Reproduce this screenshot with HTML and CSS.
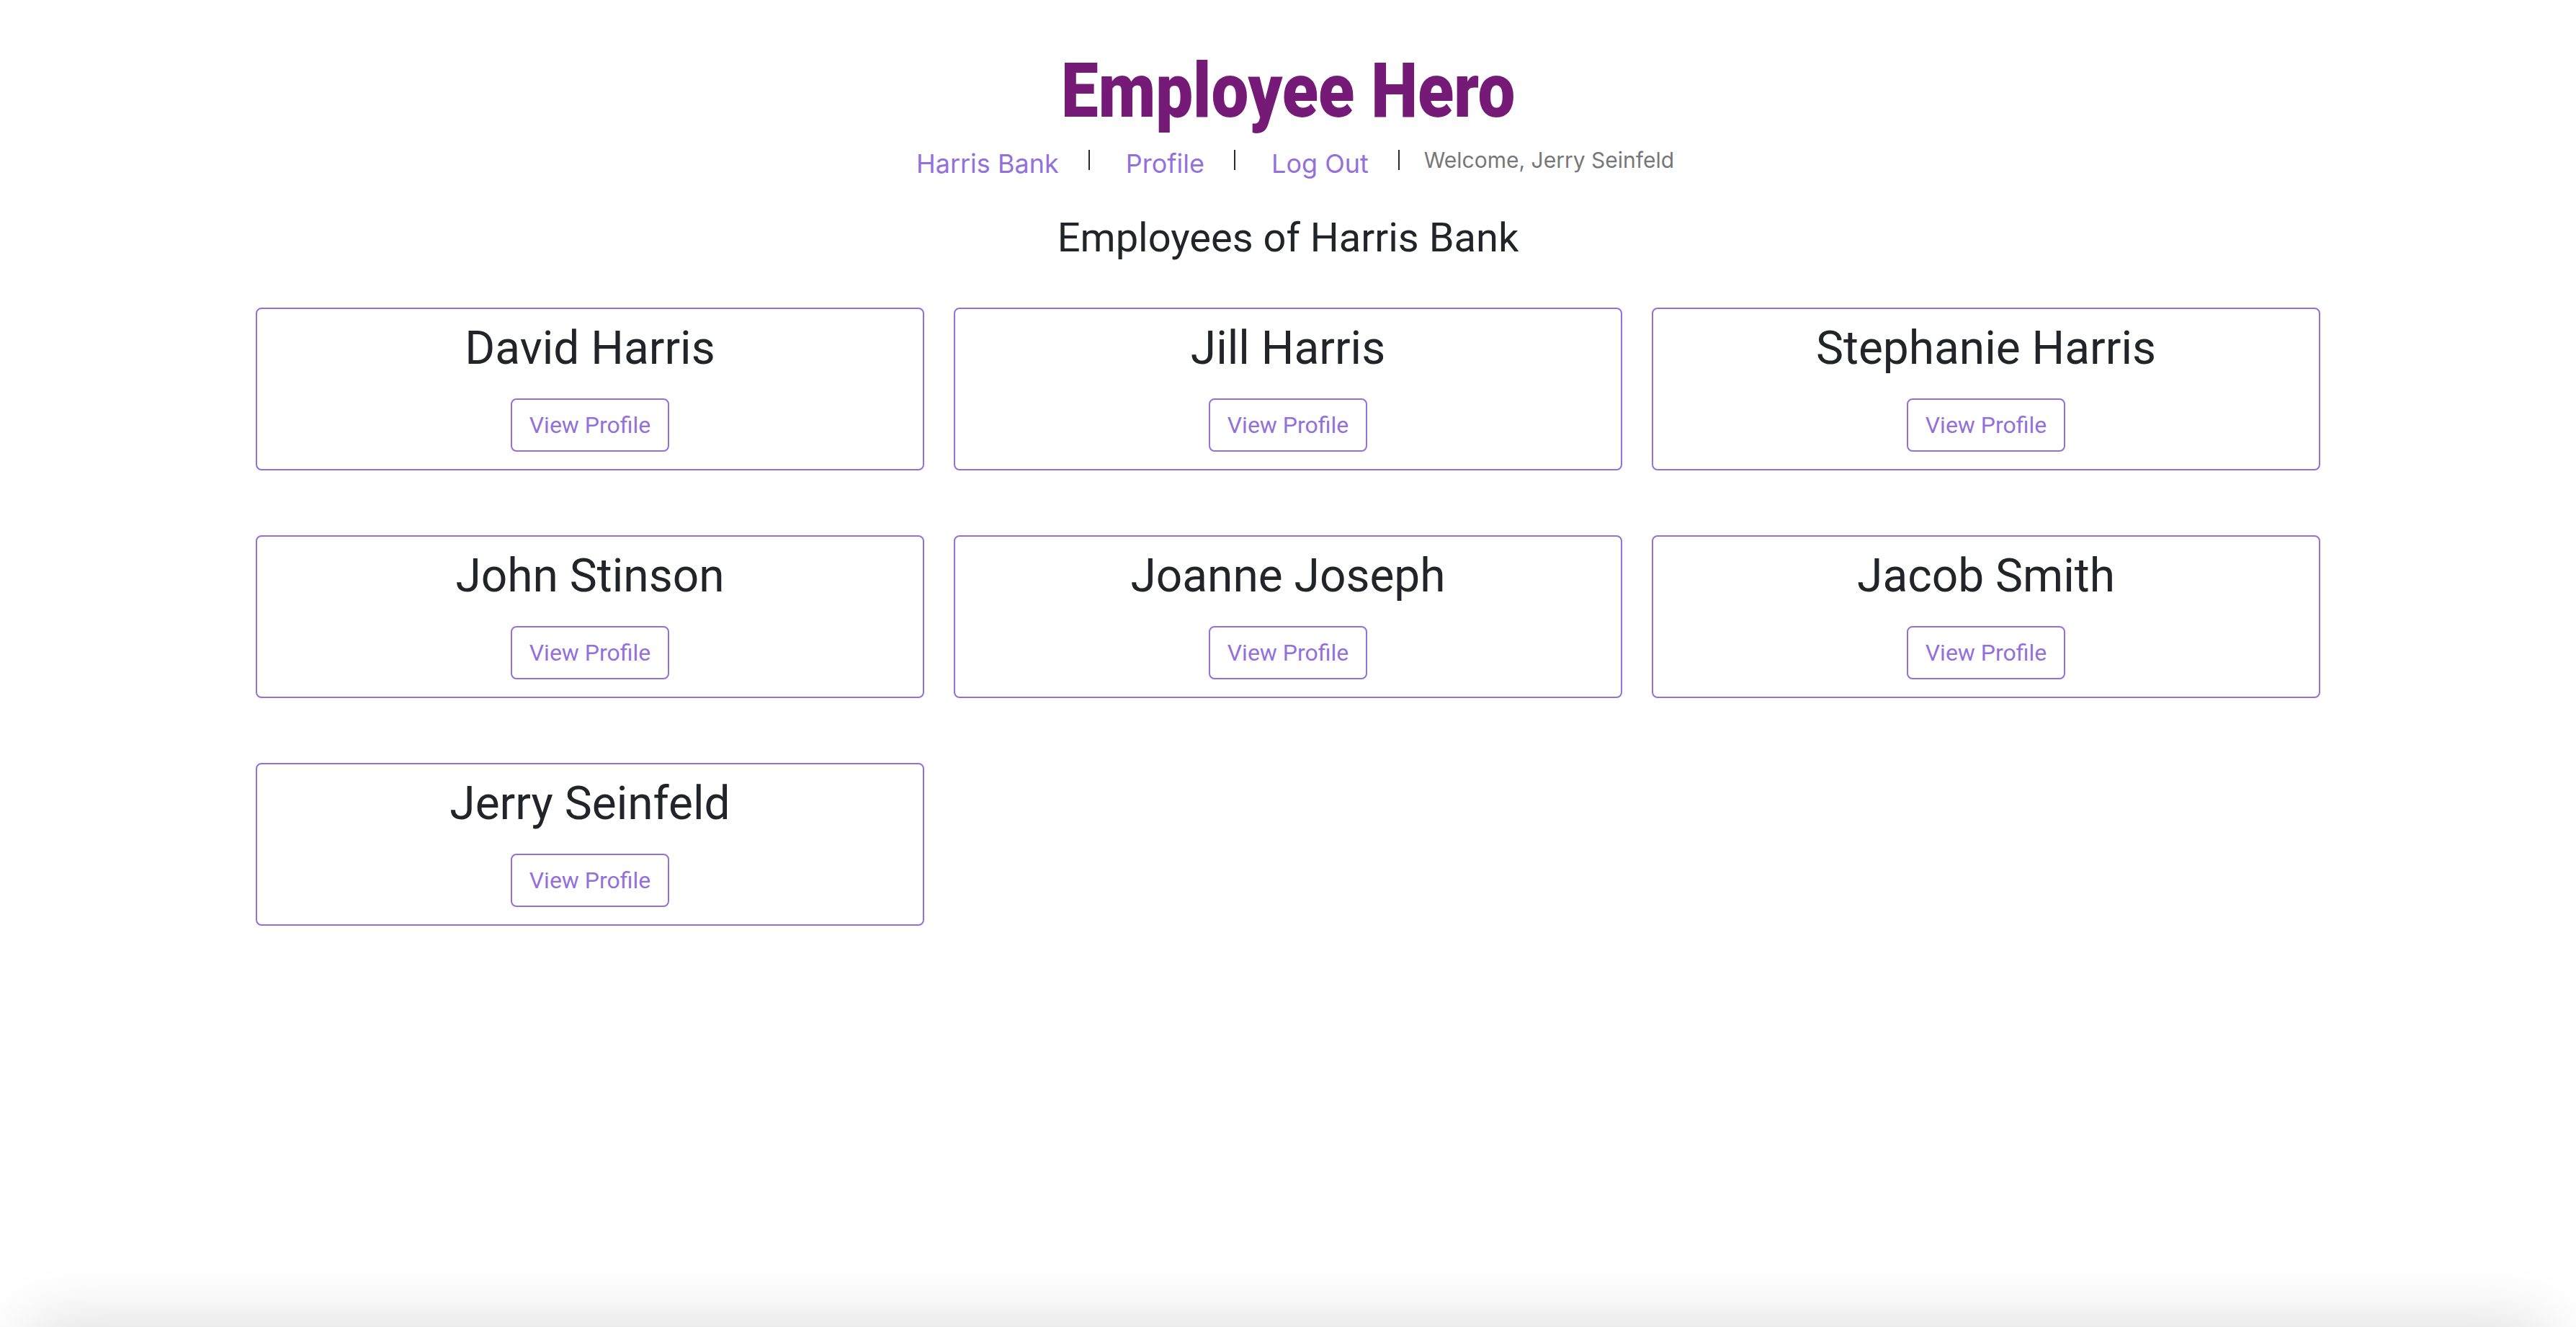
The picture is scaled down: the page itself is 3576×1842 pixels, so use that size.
FILE: index.html
```html
<!DOCTYPE html>
<html lang="en">
<head>
<meta charset="utf-8">
<title>Employee Hero</title>
<link rel="stylesheet" href="styles.css">
</head>
<body>
<header class="site-header">
  <h1 class="brand">Employee Hero</h1>
  <nav class="nav">
    <a class="nav-link" href="#">Harris Bank</a>
    <span class="sep"></span>
    <a class="nav-link" href="#">Profile</a>
    <span class="sep"></span>
    <a class="nav-link" href="#">Log Out</a>
    <span class="sep sep-last"></span>
    <span class="welcome">Welcome, Jerry Seinfeld</span>
  </nav>
</header>
<main class="container">
  <h3 class="page-title">Employees of Harris Bank</h3>
  <div class="grid">
    <div class="card"><h2 class="name">David Harris</h2><a class="btn" href="#">View Profile</a></div>
    <div class="card"><h2 class="name">Jill Harris</h2><a class="btn" href="#">View Profile</a></div>
    <div class="card"><h2 class="name">Stephanie Harris</h2><a class="btn" href="#">View Profile</a></div>
    <div class="card"><h2 class="name">John Stinson</h2><a class="btn" href="#">View Profile</a></div>
    <div class="card"><h2 class="name">Joanne Joseph</h2><a class="btn" href="#">View Profile</a></div>
    <div class="card"><h2 class="name">Jacob Smith</h2><a class="btn" href="#">View Profile</a></div>
    <div class="card"><h2 class="name">Jerry Seinfeld</h2><a class="btn" href="#">View Profile</a></div>
  </div>
</main>
<div class="bottom-shade"></div>
</body>
</html>
```
FILE: styles.css
```css
* { box-sizing: border-box; }
html, body { margin: 0; padding: 0; background: #fff; }
body {
  font-family: Roboto, Inter, "Noto Sans", sans-serif;
  color: #212529;
  min-height: 100vh;
}
.site-header {
  display: flex;
  flex-direction: column;
  align-items: center;
  padding-top: 73px;
}
.brand {
  margin: 0;
  font-family: Roboto, sans-serif;
  font-weight: 900;
  font-size: 106px;
  line-height: 1;
  color: #761a78;
  transform: scaleX(0.87);
}
.nav {
  display: flex;
  align-items: flex-start;
  margin-top: 21px;
  padding-left: 20px;
}
.nav-link {
  font-family: Inter, Roboto, sans-serif;
  font-size: 36px;
  line-height: 54px;
  color: #9370db;
  text-decoration: none;
}
.sep {
  display: inline-block;
  width: 2px;
  height: 28px;
  background: #2a2a2a;
  margin: 8px 50px 0 41px;
}
.sep-last { margin-right: 34px; }
.welcome {
  font-family: Inter, Roboto, sans-serif;
  font-size: 30px;
  line-height: 45px;
  color: #777;
}
.container {
  width: 2866px;
  margin: 0 auto;
}
.page-title {
  margin: 43px 0 63px;
  text-align: center;
  font-size: 56px;
  font-weight: 400;
  line-height: 1.2;
}
.grid {
  display: grid;
  grid-template-columns: repeat(3, 1fr);
  column-gap: 41px;
  row-gap: 90px;
}
.card {
  height: 226px;
  border: 2px solid #9370db;
  border-radius: 8px;
  display: flex;
  flex-direction: column;
  align-items: center;
  padding-top: 17px;
}
.name {
  margin: 0 0 30px;
  font-size: 64px;
  font-weight: 400;
  line-height: 1.2;
}
.btn {
  display: inline-block;
  font-size: 32px;
  line-height: 48px;
  padding: 11px 24px;
  border: 2px solid #9370db;
  border-radius: 8px;
  color: #9370db;
  text-decoration: none;
}
.bottom-shade {
  position: fixed;
  left: 40px;
  right: 40px;
  top: 100vh;
  height: 100px;
  box-shadow: 0 0 90px rgba(0,0,0,0.16);
}
```
